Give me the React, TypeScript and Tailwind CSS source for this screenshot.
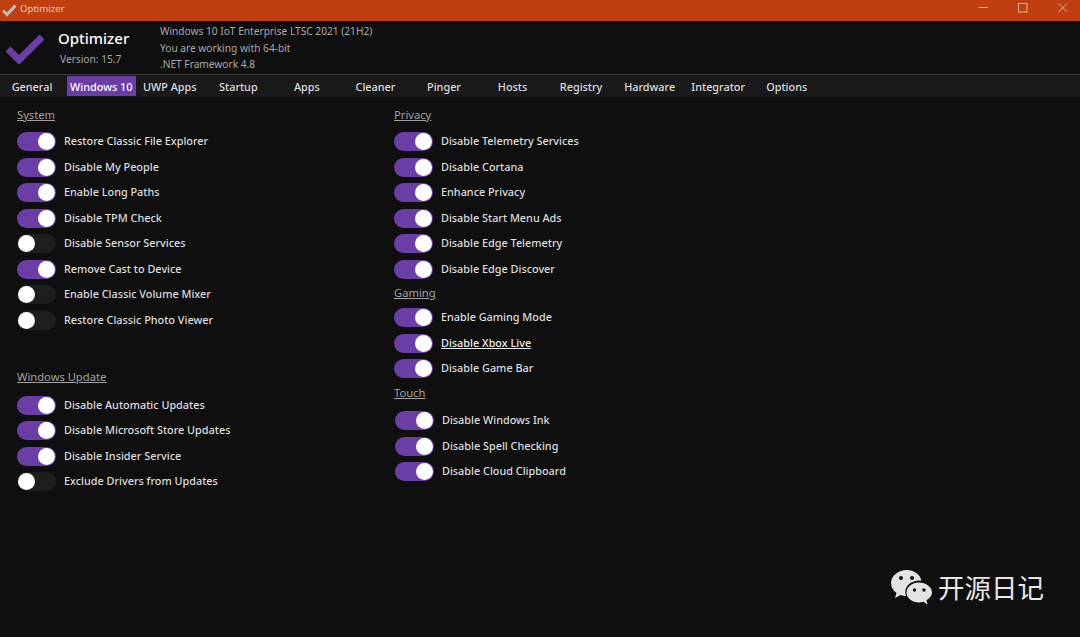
const tabs = ["General", "Windows 10", "UWP Apps", "Startup", "Apps", "Cleaner", "Pinger", "Hosts", "Registry", "Hardware", "Integrator", "Options"];

type Item = { label: string; on: boolean; hover?: boolean };

const system: Item[] = [
  { label: "Restore Classic File Explorer", on: true },
  { label: "Disable My People", on: true },
  { label: "Enable Long Paths", on: true },
  { label: "Disable TPM Check", on: true },
  { label: "Disable Sensor Services", on: false },
  { label: "Remove Cast to Device", on: true },
  { label: "Enable Classic Volume Mixer", on: false },
  { label: "Restore Classic Photo Viewer", on: false },
];

const updates: Item[] = [
  { label: "Disable Automatic Updates", on: true },
  { label: "Disable Microsoft Store Updates", on: true },
  { label: "Disable Insider Service", on: true },
  { label: "Exclude Drivers from Updates", on: false },
];

const privacy: Item[] = [
  { label: "Disable Telemetry Services", on: true },
  { label: "Disable Cortana", on: true },
  { label: "Enhance Privacy", on: true },
  { label: "Disable Start Menu Ads", on: true },
  { label: "Disable Edge Telemetry", on: true },
  { label: "Disable Edge Discover", on: true },
];

const gaming: Item[] = [
  { label: "Enable Gaming Mode", on: true },
  { label: "Disable Xbox Live", on: true, hover: true },
  { label: "Disable Game Bar", on: true },
];

const touch: Item[] = [
  { label: "Disable Windows Ink", on: true },
  { label: "Disable Spell Checking", on: true },
  { label: "Disable Cloud Clipboard", on: true },
];

const Toggle = ({ on }: { on: boolean }) => (
  <div className={`mt-[1px] flex h-[19px] w-[39px] shrink-0 items-center rounded-full px-[1px] ${on ? "justify-end bg-[#6a3ea6]" : "justify-start bg-[#1e1e1e]"}`}>
    <div className="h-[17px] w-[17px] rounded-full bg-white" />
  </div>
);

const Row = ({ item }: { item: Item }) => (
  <div className="flex h-[25.5px] items-center gap-2">
    <Toggle on={item.on} />
    <span className={`text-[10.85px] font-medium ${item.hover ? "text-[#ececec] underline" : "text-[#dedede]"}`}>{item.label}</span>
  </div>
);

const Heading = ({ children }: { children: string }) => (
  <div className="flex h-[20px] items-center text-[11.2px] text-[#a3a3a3] underline">{children}</div>
);

export default function App() {
  return (
    <div className="flex h-[637px] w-[1080px] flex-col overflow-hidden bg-[#0f0f0f] font-['Noto_Sans',sans-serif]">
      {/* title bar */}
      <div className="flex h-[21px] shrink-0 items-center justify-between bg-[#bf3f10]">
        <div className="flex items-center gap-[3px] pl-[2px]">
          <svg width="15" height="13" viewBox="0 0 15 13">
            <path d="M1 6.5 L5 10.5 L13.5 1.5" fill="none" stroke="#bdbdbd" strokeWidth="3" />
          </svg>
          <span className="pb-[2px] text-[9.6px] text-[#e6c9bb]">Optimizer</span>
        </div>
        <div className="flex items-center">
          <svg width="120" height="21" viewBox="0 0 120 21" fill="none" stroke="#eeb8a0" strokeWidth="1">
            <path d="M19 7.5 H28" />
            <rect x="58.5" y="3.5" width="8.5" height="8.5" />
            <path d="M98.5 3.5 L107 12 M107 3.5 L98.5 12" />
          </svg>
        </div>
      </div>

      {/* header */}
      <div className="flex h-[54px] shrink-0 border-b border-[#3a3a3a]">
        <div className="flex w-[58px] items-center pl-[6px]">
          <svg width="38" height="32" viewBox="0 0 38 32">
            <path d="M2 17 L13 28 L36 5" fill="none" stroke="#6a3ea6" strokeWidth="7" />
          </svg>
        </div>
        <div className="w-[102px] pt-[6px]">
          <div className="text-[15px] leading-[22px] font-medium text-white">Optimizer</div>
          <div className="pt-[2px] pl-[2px] text-[10.2px] leading-[16px] text-[#a8a8a8]">Version: 15.7</div>
        </div>
        <div className="pt-[2px] text-[10.17px] leading-[16.5px] text-[#a8a8a8]">
          <div>Windows 10 IoT Enterprise LTSC 2021 (21H2)</div>
          <div>You are working with 64-bit</div>
          <div>.NET Framework 4.8</div>
        </div>
      </div>

      {/* tabs */}
      <div className="flex h-[22px] shrink-0 items-center bg-[#191919]">
        {tabs.map((t, i) => (
          <div
            key={t}
            className={`flex h-[20px] items-center justify-center pt-[2px] text-[10.85px] font-medium ${i === 0 ? "w-[67px] pr-[3px]" : "w-[68.55px]"} ${t === "Windows 10" ? "bg-[#6a3ea6] text-white" : "text-[#dedede]"}`}
          >
            {t}
          </div>
        ))}
      </div>

      {/* content */}
      <div className="flex pt-[8px] pl-[17px]">
        <div className="w-[377px]">
          <Heading>System</Heading>
          <div className="pt-[3.5px]">
            {system.map((it) => <Row key={it.label} item={it} />)}
          </div>
          <div className="pt-[34.5px]">
            <Heading>Windows Update</Heading>
          </div>
          <div className="pt-[5px]">
            {updates.map((it) => <Row key={it.label} item={it} />)}
          </div>
        </div>
        <div>
          <Heading>Privacy</Heading>
          <div className="pt-[3.5px]">
            {privacy.map((it) => <Row key={it.label} item={it} />)}
          </div>
          <div className="pt-[2px]">
            <Heading>Gaming</Heading>
          </div>
          <div className="pt-[1px]">
            {gaming.map((it) => <Row key={it.label} item={it} />)}
          </div>
          <div className="pt-[2px]">
            <Heading>Touch</Heading>
          </div>
          <div className="pt-[4.5px] pl-[1px]">
            {touch.map((it) => <Row key={it.label} item={it} />)}
          </div>
        </div>
      </div>

      {/* watermark */}
      <div className="absolute top-[567px] left-[890px] flex items-center gap-[5px]">
        <svg width="43" height="40" viewBox="0 0 43 40">
          <path d="M17 3 C8 3 1 9 1 16 C1 20 3 23.5 6.5 26 L5 31 L10.5 28 C12 28.5 14 29 16 29 C15.5 27.5 15.3 26.5 15.3 25 C15.3 18.5 21.5 13.5 29.5 13.5 L31.5 13.5 C30 7.5 24 3 17 3 Z" fill="#e3e3e3" />
          <path d="M29 15.5 C22 15.5 16.5 20 16.5 25.5 C16.5 31 22 35.5 29 35.5 C30.5 35.5 32 35.2 33.3 34.8 L37.5 37.5 L36.5 33.2 C39.8 31.2 42 28.5 42 25.5 C42 20 36 15.5 29 15.5 Z" fill="#e3e3e3" />
          <circle cx="11" cy="11" r="2" fill="#111" />
          <circle cx="22" cy="11" r="2" fill="#111" />
          <circle cx="24.5" cy="23" r="1.7" fill="#111" />
          <circle cx="34" cy="23" r="1.7" fill="#111" />
        </svg>
        <span className="font-['Noto_Sans_CJK_SC',sans-serif] text-[26.5px] leading-[40px] text-[#e8e8e8]">开源日记</span>
      </div>
    </div>
  );
}
